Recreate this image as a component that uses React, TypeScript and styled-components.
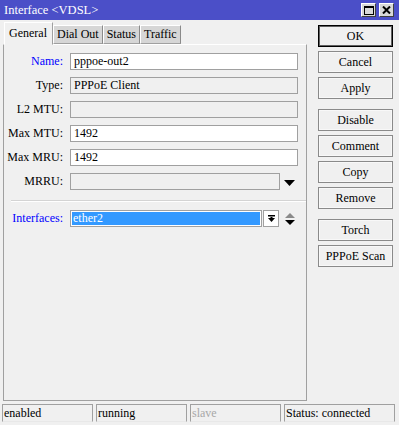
import styled, { createGlobalStyle } from "styled-components";

const GlobalStyle = createGlobalStyle`
  html, body {
    margin: 0;
    padding: 0;
    background: #f0f0f0;
  }
  * {
    box-sizing: border-box;
  }
`;

////////// Data
const tabs = ["General", "Dial Out", "Status", "Traffic"];

const fields = [
  { label: "Name:", value: "pppoe-out2", blue: true, editable: true },
  { label: "Type:", value: "PPPoE Client", blue: false, editable: false },
  { label: "L2 MTU:", value: "", blue: false, editable: false },
  { label: "Max MTU:", value: "1492", blue: false, editable: true },
  { label: "Max MRU:", value: "1492", blue: false, editable: true },
];

const buttonGroups = [
  ["OK", "Cancel", "Apply"],
  ["Disable", "Comment", "Copy", "Remove"],
  ["Torch", "PPPoE Scan"],
];

const statusCells = [
  { text: "enabled", width: 91, muted: false },
  { text: "running", width: 91, muted: false },
  { text: "slave", width: 91, muted: true },
  { text: "Status: connected", width: 111, muted: false },
];

const DownTriangle = ({ color = "#000", w = 10, h = 6 }: { color?: string; w?: number; h?: number }) => (
  <svg width={w} height={h} viewBox={`0 0 ${w} ${h}`}>
    <polygon points={`0,0 ${w},0 ${w / 2},${h}`} fill={color} />
  </svg>
);

const App = () => {
  return (
    <>
      <GlobalStyle />
      <Window>
        {/* 타이틀 */}
        <TitleBar>
          <TitleText>Interface &lt;VDSL&gt;</TitleText>
          <TitleButtons>
            <TitleButton>
              <svg width="10" height="9" viewBox="0 0 10 9">
                <rect x="0.5" y="0.5" width="9" height="8" fill="none" stroke="#000" />
                <rect x="0" y="0" width="10" height="2" fill="#000" />
              </svg>
            </TitleButton>
            <TitleButton>
              <svg width="9" height="8" viewBox="0 0 9 8">
                <path d="M1 0.5 L8 7.5 M8 0.5 L1 7.5" stroke="#000" strokeWidth="2" />
              </svg>
            </TitleButton>
          </TitleButtons>
        </TitleBar>

        <Body>
          {/* 탭 + 패널 */}
          <LeftColumn>
            <TabRow>
              {tabs.map((t, i) => (
                <Tab key={t} $active={i === 0}>
                  {t}
                </Tab>
              ))}
            </TabRow>
            <Panel>
              <Form>
                {fields.map((f) => (
                  <FieldRow key={f.label}>
                    <Label $blue={f.blue}>{f.label}</Label>
                    <Input $editable={f.editable}>{f.value}</Input>
                  </FieldRow>
                ))}
                <FieldRow>
                  <Label $blue={false}>MRRU:</Label>
                  <InputWithArrow>
                    <Input $editable={false} style={{ width: 210 }} />
                    <ArrowSlot>
                      <DownTriangle w={11} h={6} />
                    </ArrowSlot>
                  </InputWithArrow>
                </FieldRow>
              </Form>
              <Separator />
              <FieldRow>
                <Label $blue={true}>Interfaces:</Label>
                <InputWithArrow>
                  <SelectBox>
                    <Selected>ether2</Selected>
                  </SelectBox>
                  <DropButton>
                    <svg width="9" height="9" viewBox="0 0 9 9">
                      <rect x="1" y="1" width="7" height="1.5" fill="#000" />
                      <polygon points="1,4 8,4 4.5,8" fill="#000" />
                      <rect x="3.5" y="3" width="2" height="2" fill="#000" />
                    </svg>
                  </DropButton>
                  <UpDown>
                    <svg width="10" height="13" viewBox="0 0 10 13">
                      <polygon points="5,0 10,5 0,5" fill="#8a8a8a" />
                      <polygon points="0,7 10,7 5,12" fill="#000" />
                    </svg>
                  </UpDown>
                </InputWithArrow>
              </FieldRow>
            </Panel>
          </LeftColumn>

          {/* 버튼 */}
          <RightColumn>
            {buttonGroups.map((g, gi) => (
              <ButtonGroup key={gi}>
                {g.map((b) => (
                  <SideButton key={b} $default={b === "OK"}>
                    {b}
                  </SideButton>
                ))}
              </ButtonGroup>
            ))}
          </RightColumn>
        </Body>

        {/* 상태바 */}
        <StatusBar>
          {statusCells.map((c) => (
            <StatusCell key={c.text} $width={c.width} $muted={c.muted}>
              {c.text}
            </StatusCell>
          ))}
        </StatusBar>
      </Window>
    </>
  );
};

export default App;

const Window = styled.div`
  width: 399px;
  height: 425px;
  display: flex;
  flex-direction: column;
  background: #f0f0f0;
  font-family: "Liberation Serif", "Times New Roman", serif;
  font-size: 12px;
  color: #000;
  overflow: hidden;
`;

const TitleBar = styled.div`
  height: 20px;
  background: #4b4fc8;
  display: flex;
  align-items: center;
  justify-content: space-between;
  padding: 0 5px 0 4px;
`;

const TitleText = styled.div`
  color: #fff;
  font-size: 12.5px;
  line-height: 20px;
`;

const TitleButtons = styled.div`
  display: flex;
  gap: 3px;
`;

const TitleButton = styled.div`
  width: 15px;
  height: 14px;
  background: #d8d8d8;
  border: 1px solid;
  border-color: #fff #404040 #404040 #fff;
  display: flex;
  align-items: center;
  justify-content: center;
`;

const Body = styled.div`
  flex: 1;
  display: flex;
  padding-left: 3px;
`;

const LeftColumn = styled.div`
  width: 304px;
  display: flex;
  flex-direction: column;
  padding-top: 2px;
`;

const TabRow = styled.div`
  display: flex;
  align-items: flex-end;
  height: 22px;
  padding-left: 1px;
  position: relative;
  z-index: 1;
`;

const Tab = styled.div<{ $active: boolean }>`
  height: ${({ $active }) => ($active ? "23px" : "19px")};
  margin-bottom: ${({ $active }) => ($active ? "-1px" : "0")};
  padding: ${({ $active }) => ($active ? "3px 5px 0 4px" : "1px 3px 0 3px")};
  background: ${({ $active }) => ($active ? "#f0f0f0" : "#d6d6d6")};
  border: 1px solid;
  border-color: ${({ $active }) => ($active ? "#fff #a0a0a0 transparent #fff" : "#fff #8a8a8a #a0a0a0 #fff")};
  line-height: 15px;
  white-space: nowrap;
`;

const Panel = styled.div`
  height: 357px;
  border: 1px solid;
  border-color: #fff #a0a0a0 #a0a0a0 #a0a0a0;
  padding: 8px 0 0 0;
`;

const Form = styled.div`
  display: flex;
  flex-direction: column;
  gap: 7px;
`;

const FieldRow = styled.div`
  display: flex;
  align-items: center;
  height: 17px;
`;

const Label = styled.div<{ $blue: boolean }>`
  width: 59px;
  margin-right: 7px;
  text-align: right;
  color: ${({ $blue }) => ($blue ? "#0000ff" : "#000")};
  white-space: nowrap;
`;

const Input = styled.div<{ $editable: boolean }>`
  width: 228px;
  height: 17px;
  border: 1px solid #a0a0a0;
  background: ${({ $editable }) => ($editable ? "#fff" : "#f0f0f0")};
  padding: 0 3px;
  line-height: 15px;
  white-space: nowrap;
`;

const InputWithArrow = styled.div`
  display: flex;
  align-items: center;
`;

const ArrowSlot = styled.div`
  width: 19px;
  display: flex;
  justify-content: center;
  padding-top: 2px;
`;

const Separator = styled.div`
  height: 2px;
  margin: 10px 0 8px 7px;
  border-top: 1px solid #d4d4d4;
  border-bottom: 1px solid #fff;
`;

const SelectBox = styled.div`
  width: 192px;
  height: 17px;
  border: 1px solid #a0a0a0;
  background: #fff;
  padding: 1px;
`;

const Selected = styled.div`
  height: 100%;
  background: #3399ff;
  color: #fff;
  line-height: 13px;
  padding-left: 1px;
`;

const DropButton = styled.div`
  width: 16px;
  height: 17px;
  margin-left: 1px;
  border: 1px solid #a0a0a0;
  background: #fff;
  display: flex;
  align-items: center;
  justify-content: center;
`;

const UpDown = styled.div`
  width: 21px;
  display: flex;
  justify-content: center;
  padding-top: 1px;
`;

const RightColumn = styled.div`
  margin-left: 11px;
  width: 75px;
  padding-top: 5px;
  display: flex;
  flex-direction: column;
  gap: 10px;
`;

const ButtonGroup = styled.div`
  display: flex;
  flex-direction: column;
  gap: 4px;
`;

const SideButton = styled.div<{ $default: boolean }>`
  height: 22px;
  border: 1px solid ${({ $default }) => ($default ? "#000" : "#8a8a8a")};
  box-shadow: ${({ $default }) => ($default ? "inset 0 0 0 1px #606060" : "inset 0 0 0 1px #f8f8f8")};
  background: #f0f0f0;
  display: flex;
  align-items: center;
  justify-content: center;
  white-space: nowrap;
`;

const StatusBar = styled.div`
  height: 23px;
  display: flex;
  gap: 3px;
  padding: 2px 0 0 2px;
`;

const StatusCell = styled.div<{ $width: number; $muted: boolean }>`
  width: ${({ $width }) => `${$width}px`};
  height: 18px;
  border: 1px solid;
  border-color: #a0a0a0 #a0a0a0 #e8e8e8 #a0a0a0;
  color: ${({ $muted }) => ($muted ? "#a8a8a8" : "#000")};
  padding-left: 1px;
  line-height: 16px;
  white-space: nowrap;
  overflow: hidden;
`;
